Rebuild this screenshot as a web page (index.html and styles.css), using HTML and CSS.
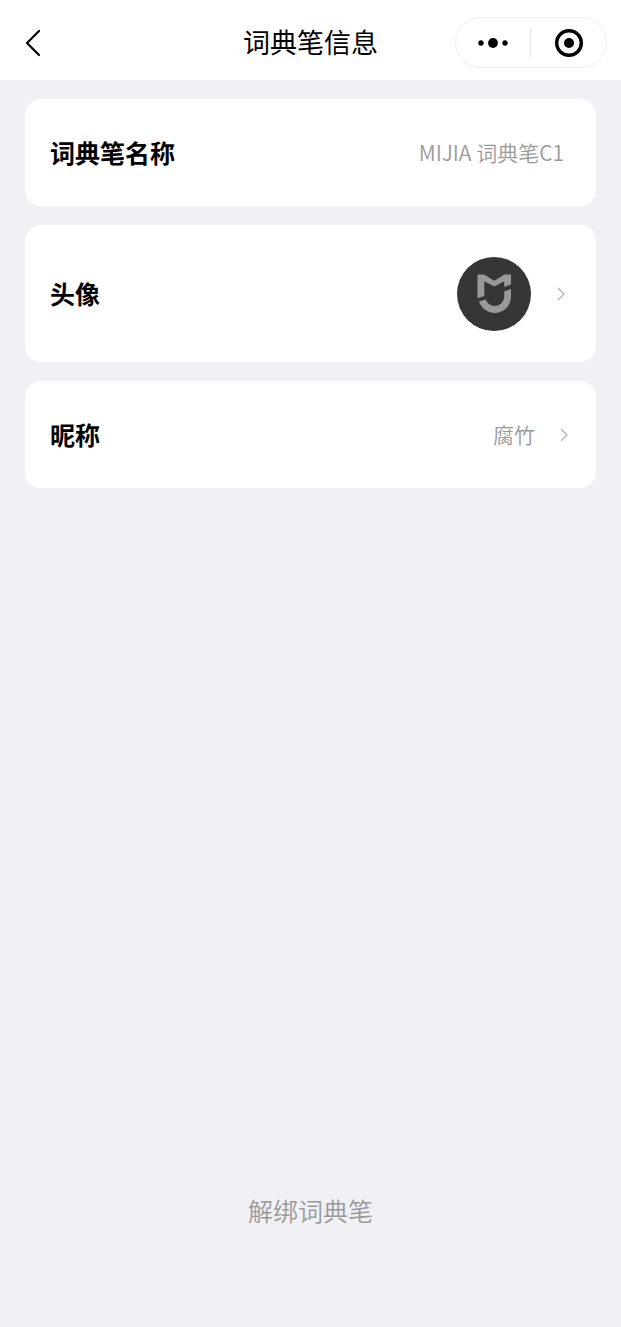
FILE: index.html
```html
<!DOCTYPE html>
<html lang="zh-CN">
<head>
<meta charset="utf-8">
<meta name="viewport" content="width=device-width, initial-scale=1">
<title>词典笔信息</title>
<link rel="stylesheet" href="styles.css">
</head>
<body>
<header class="navbar">
  <div class="nav-side">
    <button class="icon-button back" type="button" aria-label="返回">
      <svg width="16" height="28" viewBox="0 0 16 28" fill="none" stroke="#000" stroke-width="2.2" stroke-linecap="round" stroke-linejoin="round"><path d="M14 2 2 14 14 26"/></svg>
    </button>
  </div>
  <h1 class="title">词典笔信息</h1>
  <div class="nav-side nav-end">
    <div class="capsule">
      <button class="icon-button capsule-button" type="button" aria-label="更多">
        <svg width="30" height="12" viewBox="0 0 30 12"><circle cx="3" cy="6" r="2.7"/><circle cx="15" cy="6" r="4.9"/><circle cx="27" cy="6" r="2.7"/></svg>
      </button>
      <button class="icon-button capsule-button capsule-close" type="button" aria-label="关闭">
        <svg width="28" height="28" viewBox="0 0 28 28"><circle cx="14" cy="14" r="12.3" fill="none" stroke="#000" stroke-width="3.4"/><circle cx="14" cy="14" r="5"/></svg>
      </button>
    </div>
  </div>
</header>
<main class="content">
  <section class="card">
    <span class="label">词典笔名称</span>
    <span class="value">MIJIA 词典笔C1</span>
  </section>
  <button class="card card-tall" type="button">
    <span class="label">头像</span>
    <svg class="avatar" width="74" height="74" viewBox="0 0 74 74" role="img" aria-label="米家">
      <circle cx="37" cy="37" r="37" fill="#363636"/>
      <path fill="#999" d="M20.5 17.5H27L37.300 23.800 47.500 17.500H54V27.500L47.200 30V24.300L37.300 29.500 27.300 24.300V39L20.500 41.200ZM54 32V40.500A16.300 16.300 0 0 1 37.700 56C30.500 56 24.500 51.500 22 44.600L28.600 42.500C30.500 46.800 33.500 49 37.700 49A9.500 9.500 0 0 0 47.200 40V34.400Z"/>
    </svg>
    <svg class="chevron" width="8" height="14" viewBox="0 0 8 14"><path d="M1 1 7 7 1 13"/></svg>
  </button>
  <button class="card card-link" type="button">
    <span class="label">昵称</span>
    <span class="value">腐竹</span>
    <svg class="chevron" width="8" height="14" viewBox="0 0 8 14"><path d="M1 1 7 7 1 13"/></svg>
  </button>
</main>
<footer class="footer">
  <button class="unbind" type="button">解绑词典笔</button>
</footer>
</body>
</html>
```
FILE: styles.css
```css
* {
  box-sizing: border-box;
}

body {
  display: flex;
  flex-direction: column;
  min-height: 100vh;
  margin: 0;
  background: #f1f0f5;
  color: #000;
  font-family: "Noto Sans CJK SC", sans-serif;
}

button {
  border: 0;
  background: none;
  color: inherit;
  font-family: inherit;
}

.navbar {
  display: flex;
  align-items: center;
  padding: 17px 14px 12px;
  background: #fff;
}

.nav-side {
  display: flex;
  flex: 1;
}

.nav-end {
  justify-content: flex-end;
}

.icon-button {
  display: flex;
  align-items: center;
  justify-content: center;
  padding: 0;
}

.back {
  padding: 0 11px;
}

.title {
  margin: 0;
  padding-bottom: 2px;
  font-size: 27px;
  font-weight: 400;
  line-height: 40px;
}

.capsule {
  display: flex;
  align-items: center;
  width: 152px;
  height: 51px;
  border: 1px solid #eee;
  border-radius: 26px;
}

.capsule-button {
  flex: 1;
  height: 30px;
}

.capsule-close {
  padding-left: 2px;
  border-left: 1px solid #e8e8e8;
}

.content {
  display: flex;
  flex-direction: column;
  gap: 19px;
  padding: 19px 25px;
}

.card {
  display: flex;
  align-items: center;
  width: 100%;
  min-height: 107px;
  padding: 0 32px 0 25px;
  border-radius: 16px;
  background: #fff;
  text-align: left;
}

.card-tall {
  min-height: 137px;
  padding-right: 31px;
}

.card-link {
  padding-right: 28px;
}

.label {
  flex: 1;
  padding-bottom: 2px;
  font-size: 25px;
  font-weight: 700;
  line-height: 38px;
}

.value {
  padding-bottom: 2px;
  color: #999;
  font-size: 21px;
  font-weight: 350;
  line-height: 32px;
}

.chevron {
  margin-left: 25px;
  fill: none;
  stroke: #bbb;
  stroke-width: 1.5;
}

.avatar + .chevron {
  margin-left: 26px;
}

.footer {
  display: flex;
  justify-content: center;
  margin-top: auto;
  padding-bottom: 98px;
}

.unbind {
  padding: 0;
  color: #999;
  font-size: 25px;
  font-weight: 350;
  line-height: 38px;
}
```
